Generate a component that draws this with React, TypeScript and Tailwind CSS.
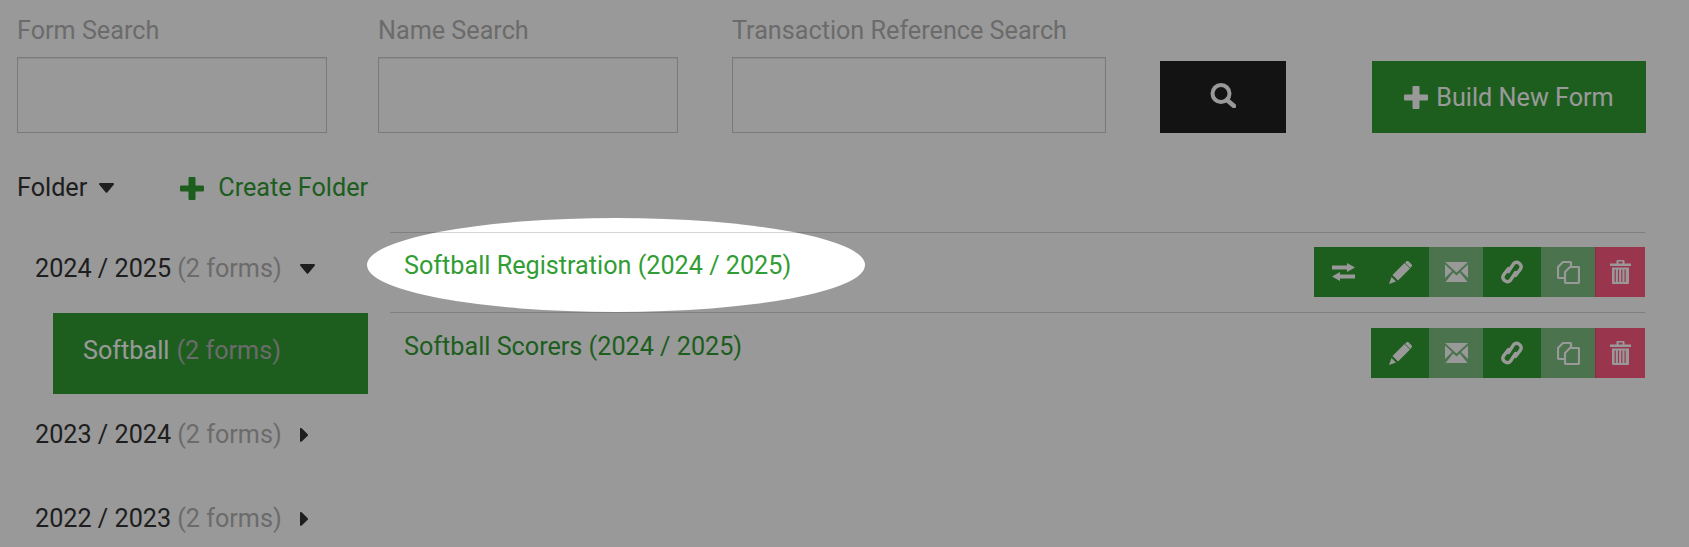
function PlusIcon({ className }: { className?: string }) {
  return (
    <svg viewBox="0 0 24 23" className={className} fill="currentColor">
      <path d="M8.5 1a1 1 0 0 1 1-1h5a1 1 0 0 1 1 1v7.5H23a1 1 0 0 1 1 1v4a1 1 0 0 1-1 1h-7.5V22a1 1 0 0 1-1 1h-5a1 1 0 0 1-1-1v-7.5H1a1 1 0 0 1-1-1v-4a1 1 0 0 1 1-1h7.5z" />
    </svg>
  );
}

function CaretDown({ className }: { className?: string }) {
  return (
    <svg viewBox="0 0 15 10" className={`h-[10px] w-[15px] ${className ?? ""}`} fill="currentColor">
      <path d="M1 0h13a1 1 0 0 1 .7 1.7L8.2 9.4a1 1 0 0 1-1.4 0L.3 1.7A1 1 0 0 1 1 0z" />
    </svg>
  );
}

function CaretRight({ className }: { className?: string }) {
  return (
    <svg viewBox="0 0 8 14" className={`h-[14px] w-[8px] ${className ?? ""}`} fill="currentColor">
      <path d="M0 1a1 1 0 0 1 1.7-.7l6 5.9a1 1 0 0 1 0 1.5l-6 5.9A1 1 0 0 1 0 13z" />
    </svg>
  );
}

function SearchIcon() {
  return (
    <svg viewBox="0 0 26 25" className="mb-[4px] h-[25px] w-[26px]" fill="none" stroke="currentColor">
      <circle cx="11" cy="10.5" r="8.5" strokeWidth="4" />
      <path d="M17 17l7 6" strokeWidth="4.6" strokeLinecap="round" />
    </svg>
  );
}

function ExchangeIcon() {
  return (
    <svg viewBox="0 0 23 18" className="h-[18px] w-[23px]" fill="currentColor">
      <path d="M0 2.5h15V0l8 4.5-8 4.5V6.5H0z" />
      <path d="M23 11.5H8V9l-8 4.5L8 18v-2.5h15z" />
    </svg>
  );
}

function PencilIcon() {
  return (
    <svg viewBox="0 0 23 23" className="h-[23px] w-[23px]" fill="currentColor">
      <path d="M3.5 14L15.5 2 21 7.5 9 19.5z" />
      <path d="M17 .8a2 2 0 0 1 3 0l2.2 2.2a2 2 0 0 1 0 3l-.9.9-5.2-5.2z" />
      <path d="M2.5 16L7 20.5 0 23z" />
    </svg>
  );
}

function EnvelopeIcon() {
  return (
    <svg viewBox="0 0 23 20" className="h-[20px] w-[23px]" fill="currentColor">
      <path d="M0 0h23L11.5 10.5z" />
      <path d="M0 2.5L7 9l-7 7z" />
      <path d="M23 2.5L16 9l7 7z" />
      <path d="M.5 20l7.7-9.5 3.3 3 3.3-3 7.7 9.5z" />
    </svg>
  );
}

function LinkIcon() {
  return (
    <svg viewBox="0 0 22 24" className="h-[24px] w-[22px]" fill="none" stroke="currentColor" strokeWidth="3.4" strokeLinecap="round">
      <path d="M7.5 11.5L12.5 3.8a4.4 4.4 0 0 1 7 5.2L14.5 15.5" />
      <path d="M14.5 12.5L9.5 20.2a4.4 4.4 0 0 1-7-5.2L7.5 8.5" />
    </svg>
  );
}

function CopyIcon() {
  return (
    <svg viewBox="0 0 23 23" className="h-[23px] w-[23px]" fill="none" stroke="currentColor" strokeWidth="2.2" strokeLinejoin="round">
      <path d="M7.5 17H2a1 1 0 0 1-1-1V6l5-5h7a1 1 0 0 1 1 1v4" />
      <path d="M13 6h8.5a.5.5 0 0 1 .5.5V21a1 1 0 0 1-1 1H9a1 1 0 0 1-1-1V11z" />
    </svg>
  );
}

function TrashIcon() {
  return (
    <svg viewBox="0 0 21 24" className="h-[24px] w-[21px]" fill="currentColor">
      <path d="M0 3.5h6.5V1a1 1 0 0 1 1-1h6a1 1 0 0 1 1 1v2.5H21V6H0zM8.5 1.6v1.9h4V1.6z" />
      <path d="M2 7.5h17V23a1 1 0 0 1-1 1H3a1 1 0 0 1-1-1zm2.6 2V22h1.2V9.5zm3.3 0V22h1.2V9.5zm3.3 0V22h1.2V9.5zm3.3 0V22h1.2V9.5z" fillRule="evenodd" />
    </svg>
  );
}

function SearchField({ label, width }: { label: string; width: string }) {
  return (
    <div className={`${width} shrink-0`}>
      <div className="h-[57px] pt-[14px] text-[25.2px] leading-[34px] text-[#b3b3b3]">{label}</div>
      <div className="h-[76px] border border-[#cccccc] bg-white shadow-[inset_0_1px_1px_rgba(0,0,0,0.075)]" />
    </div>
  );
}

function Actions({ exchange }: { exchange?: boolean }) {
  return (
    <div className="flex h-[50px] text-white">
      {exchange && (
        <div className="flex w-[58px] items-center justify-center bg-[#319d34]">
          <ExchangeIcon />
        </div>
      )}
      <div className={`flex items-center justify-center bg-[#319d34] ${exchange ? "w-[57px]" : "w-[58px]"}`}>
        <PencilIcon />
      </div>
      <div className="flex w-[54px] items-center justify-center bg-[#7dc082]">
        <EnvelopeIcon />
      </div>
      <div className="flex w-[58px] items-center justify-center bg-[#319d34]">
        <LinkIcon />
      </div>
      <div className="flex w-[54px] items-center justify-center bg-[#7dc082]">
        <CopyIcon />
      </div>
      <div className="flex w-[50px] items-center justify-center border-l border-[#e64a68] bg-[#ff5a82]">
        <TrashIcon />
      </div>
    </div>
  );
}

function FolderRow({ name, open }: { name: string; open?: boolean }) {
  return (
    <div className={`flex h-[84px] items-center pl-[35px] text-[25.2px] text-[#333333] ${open ? "pt-[2px]" : ""}`}>
      <span>{name}</span>
      <span className="ml-[6px] text-[#b3b3b3]">(2 forms)</span>
      {open ? <CaretDown className="ml-[18px]" /> : <CaretRight className="ml-[18px]" />}
    </div>
  );
}

export default function App() {
  return (
    <div className="relative h-[547px] w-[1689px] overflow-hidden bg-white font-['Roboto',sans-serif]">
      <div className="flex items-end px-[17px]">
        <SearchField label="Form Search" width="w-[310px]" />
        <div className="w-[51px] shrink-0" />
        <SearchField label="Name Search" width="w-[300px]" />
        <div className="w-[54px] shrink-0" />
        <SearchField label="Transaction Reference Search" width="w-[374px]" />
        <div className="ml-[54px] flex h-[72px] w-[126px] shrink-0 items-center justify-center bg-[#202020] text-white">
          <SearchIcon />
        </div>
        <div className="ml-[86px] flex h-[72px] w-[274px] shrink-0 items-center justify-center gap-[8px] bg-[#319d34] text-[25.2px] text-white">
          <PlusIcon className="h-[23px] w-[24px]" />
          <span className="pt-[2px]">Build New Form</span>
        </div>
      </div>

      <div className="flex h-[93px] items-center pl-[17px] pt-[17px] text-[25.2px] text-[#333333]">
        <span>Folder</span>
        <CaretDown className="ml-[12px]" />
        <PlusIcon className="ml-[66px] h-[23px] w-[24px] text-[#319d34]" />
        <span className="ml-[14px] text-[#319d34]">Create Folder</span>
      </div>

      <div className="flex">
        <div className="w-[368px] shrink-0">
          <FolderRow name="2024 / 2025" open />
          <div className="ml-[53px] mt-[3px] mb-[-1px] flex h-[81px] items-center bg-[#319d34] pb-[6px] pl-[30px] text-[25.2px] text-white">
            Softball <span className="ml-[7px] text-[#b3b3b3]">(2 forms)</span>
          </div>
          <FolderRow name="2023 / 2024" />
          <FolderRow name="2022 / 2023" />
        </div>
        <div className="ml-[22px] mt-[6px] w-[1255px] shrink-0">
          <div className="flex h-[80px] border-t border-[#d4d4d4] pl-[14px] pt-[14px]">
            <div className="flex-1 pt-[2px] text-[25.2px] leading-[34px] text-[#319d34]">Softball Registration (2024 / 2025)</div>
            <Actions exchange />
          </div>
          <div className="flex h-[80px] border-t border-[#d4d4d4] pl-[14px] pt-[15px]">
            <div className="flex-1 pt-[2px] text-[25.2px] leading-[34px] text-[#319d34]">Softball Scorers (2024 / 2025)</div>
            <Actions />
          </div>
        </div>
      </div>

      {/* spotlight over the first form row */}
      <div className="absolute left-[367px] top-[218px] h-[94px] w-[498px] rounded-[50%] shadow-[0_0_0_2000px_rgba(0,0,0,0.4)]" />
    </div>
  );
}
